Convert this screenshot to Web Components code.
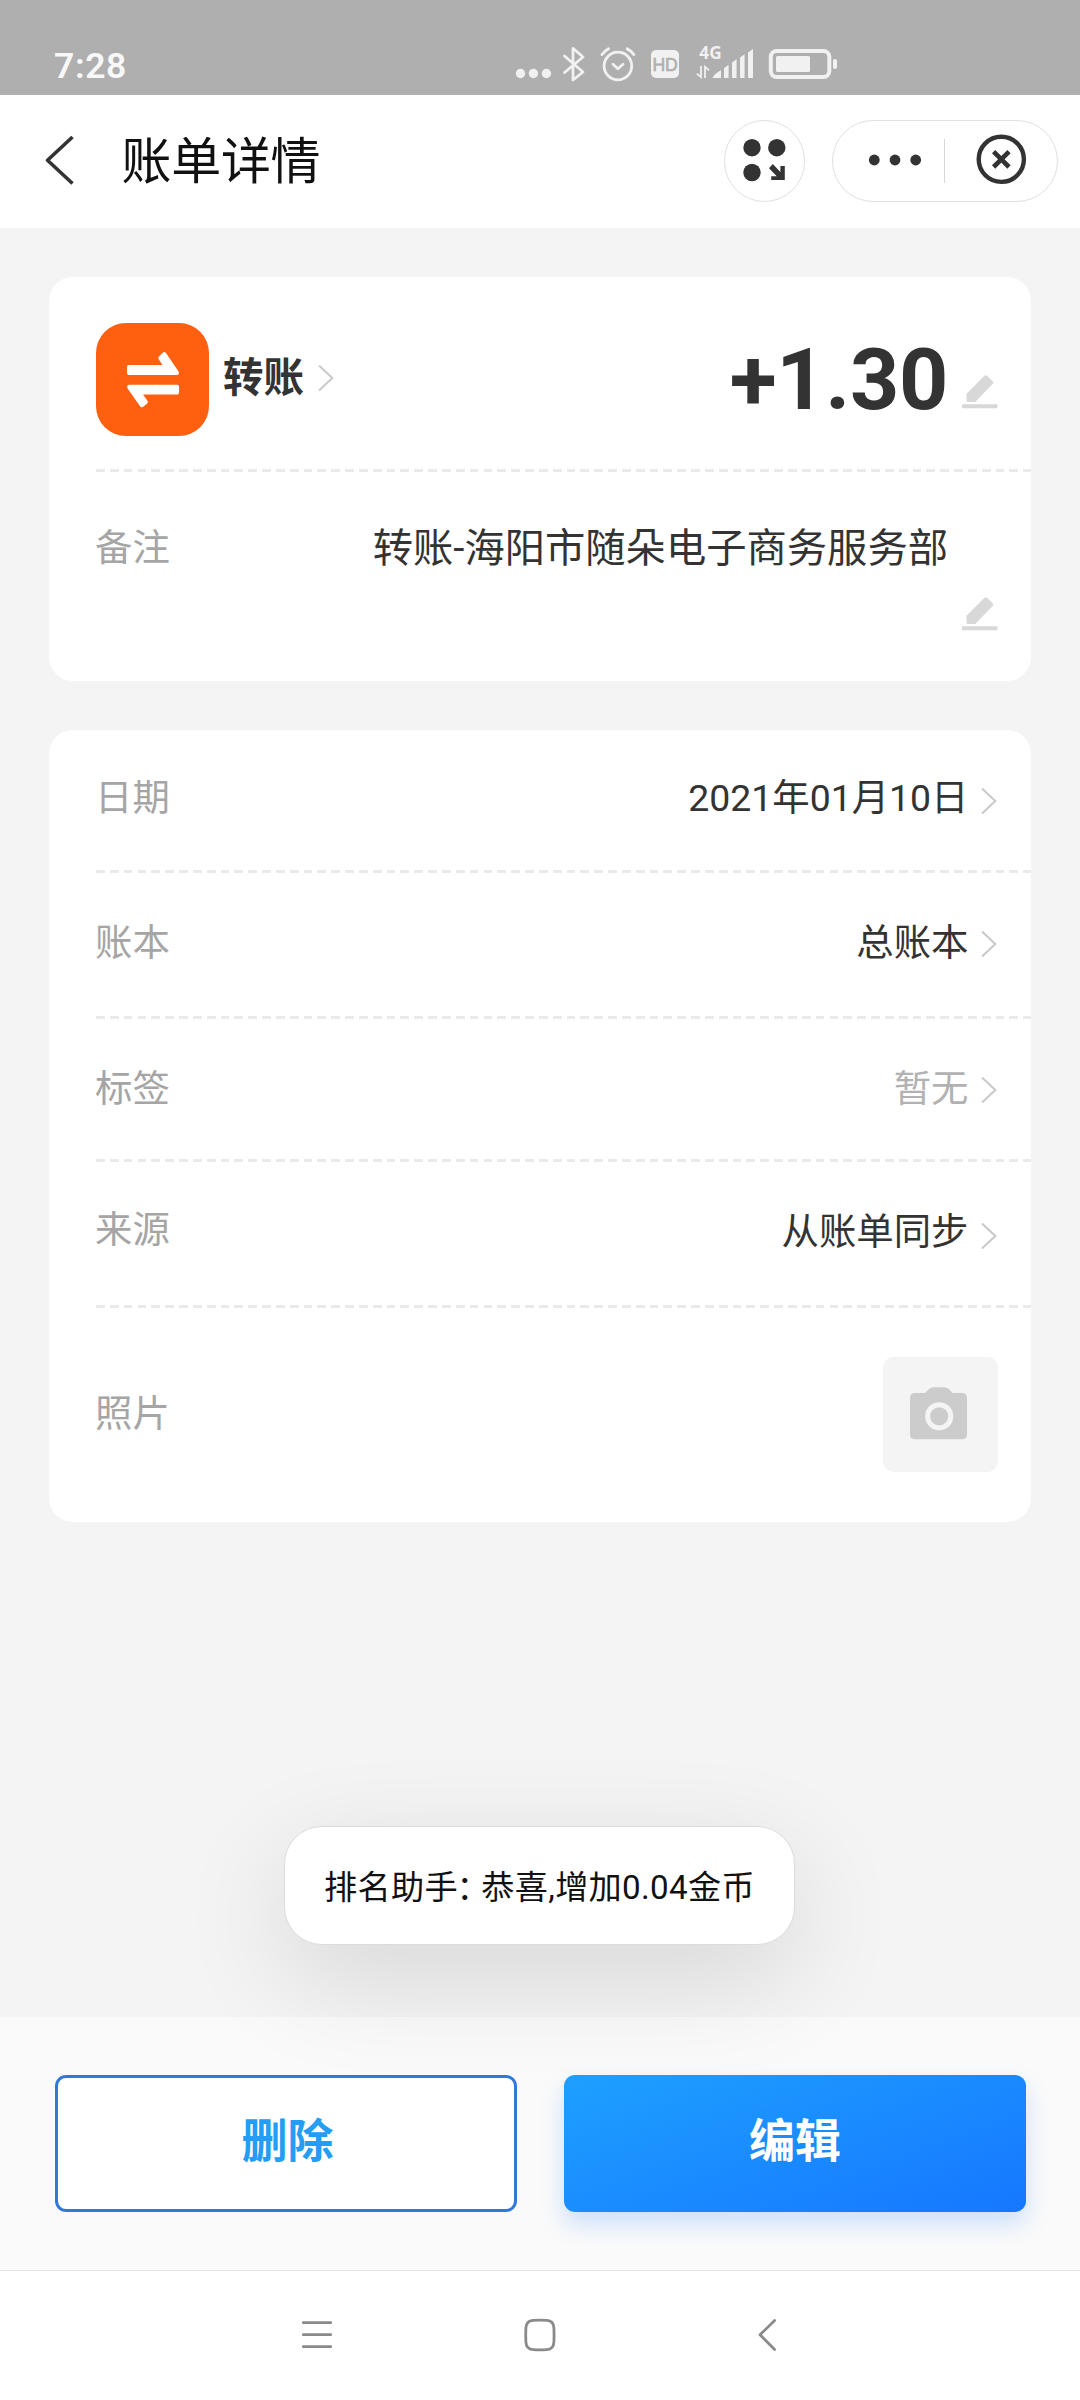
<!DOCTYPE html>
<html lang="zh-CN">
<head>
<meta charset="utf-8">
<title>账单详情</title>
<style>
  html, body { margin: 0; padding: 0; }
  body { width: 1080px; height: 2400px; overflow: hidden; background: #f4f4f4; font-family: Roboto, "Noto Sans CJK SC", sans-serif; color: #333; }
</style>
</head>
<body>
<bill-app></bill-app>
<script>
const define = (name, css, html) => customElements.define(name, class extends HTMLElement {
  constructor() {
    super();
    this.attachShadow({ mode: 'open' }).innerHTML = `<style>*{box-sizing:border-box}svg{display:block;flex:none}${css}</style>${html}`;
  }
});

define('status-bar', `
  :host { display: flex; height: 95px; background: #afafaf; color: #f1f1f1; padding-left: 54px; }
  .time { width: 458px; margin-top: 44.5px; font-size: 35.5px; line-height: 42px; font-weight: 600; letter-spacing: .6px; color: #f8f8f8; }
`, `
  <div class="time">7:28</div>
  <svg width="330" height="95" viewBox="512 0 330 95" fill="#f1f1f1">
    <circle cx="520.5" cy="73.5" r="4.7"/><circle cx="533.4" cy="73.5" r="4.7"/><circle cx="546.4" cy="73.5" r="4.7"/>
    <path d="M564.5 56L583 72L573 80V48.3L583 57L564.5 72.5" fill="none" stroke="#f1f1f1" stroke-width="2.8" stroke-linejoin="round" stroke-linecap="round"/>
    <g fill="none" stroke="#f1f1f1" stroke-linecap="round" stroke-linejoin="round">
      <circle cx="617.9" cy="66" r="13.8" stroke-width="2.8"/>
      <path d="M613 64.3L617.9 68.8L623 64.3" stroke-width="2.8"/>
      <path d="M602 54.5Q604.5 51 608.5 48.8M633.8 54.5Q631.5 51 627.3 48.8" stroke-width="3"/>
    </g>
    <rect x="651" y="50" width="28" height="28" rx="5"/>
    <text x="665.1" y="71" text-anchor="middle" font-family="Liberation Sans" font-weight="400" font-size="17.6" fill="#afafaf" stroke="#afafaf" stroke-width=".6">HD</text>
    <text x="699.3" y="59.4" font-family="Noto Sans" font-weight="700" font-size="17.2">4G</text>
    <path d="M712.5 78Q714.5 73.5 721 70.3V78ZM724 78V68.3L728.6 64.8V78ZM732 78V62.8L736.6 59V78ZM740 78V57.6L744.6 54.2V78ZM748 78V52.5L753 49V78Z"/>
    <path d="M701 66V77L696.8 73.6M705 78V66.7L709 70.4" fill="none" stroke="#f1f1f1" stroke-width="1.8"/>
    <rect x="770.8" y="51" width="58.5" height="26" rx="6" fill="none" stroke="#f1f1f1" stroke-width="4"/>
    <rect x="776" y="56" width="34" height="16" rx="1.5"/>
    <rect x="833" y="59" width="4" height="10" rx="2"/>
  </svg>`);

define('title-bar', `
  :host { display: flex; height: 133px; background: #fff; padding: 25px 22px 0 43px; }
  .back { margin-top: 14px; }
  h1 { margin: 11.5px 0 0 46.5px; font-size: 50px; line-height: 60px; font-weight: 400; color: #111; flex: 1; letter-spacing: -.3px; }
  .round, .capsule { border: 1px solid #e0e0e0; height: 82px; border-radius: 41px; display: flex; }
  .round { width: 81px; margin-right: 27px; }
  .capsule { width: 226px; }
`, `
  <svg class="back" width="32" height="52" viewBox="44 134 32 52" fill="none" stroke="#333" stroke-width="3.6" stroke-linejoin="round"><path d="M73.5 137L48.5 160.3L73.5 183.5"/></svg>
  <h1>账单详情</h1>
  <div class="round"><svg width="79" height="80" viewBox="725 121 79 80" fill="#333">
    <circle cx="752" cy="147.7" r="8.7"/><circle cx="776.8" cy="147.7" r="8.7"/><circle cx="752" cy="172.5" r="8.7"/>
    <path d="M772.8 164L780.4 171.9V166H784.8V180H771.2V176.2H776.8L769 168.3Z"/>
  </svg></div>
  <div class="capsule"><svg width="224" height="80" viewBox="833 121 224 80" fill="#333">
    <circle cx="874.3" cy="160" r="5.4"/><circle cx="895" cy="160" r="5.4"/><circle cx="915.7" cy="160" r="5.4"/>
    <rect x="944" y="139" width="1" height="44" fill="#d8d8d8"/>
    <circle cx="1001.3" cy="159.3" r="22.6" fill="none" stroke="#333" stroke-width="4.4"/>
    <path d="M993.6 151.6L1009 167M1009 151.6L993.6 167" stroke="#333" stroke-width="4.6"/>
  </svg></div>`);

define('info-card', `
  :host { display: block; width: 982px; margin-left: 49px; background: #fff; border-radius: 24px; padding-left: 47px; }
`, `<slot></slot>`);

define('dash-line', `
  :host { display: block; height: 3px; background: repeating-linear-gradient(90deg, #eaeaea 0 8.8px, transparent 8.8px 13.84px); }
`, ``);

define('chevron-icon', `:host { display: block; flex: none; }`, `
  <svg width="16" height="28" viewBox="0 0 16 28" fill="none" stroke="#c9c9c9" stroke-width="2"><path d="M1 1.5L14.3 14L1 26.5"/></svg>`);

define('pencil-icon', `:host { display: block; flex: none; }`, `
  <svg width="36" height="34" viewBox="0 0 36 34" fill="#d8d8d8"><path d="M4.5 18.8L22.2 1Q23.8 -.3 25.4 1.1L30.6 6.2Q31.9 7.6 30.6 9L13.3 27H6Q4.5 27 4.5 25.5Z"/><rect x="0" y="29.3" width="35.5" height="4" rx=".5"/></svg>`);

define('bill-summary', `
  :host { display: block; height: 192px; }
  .row { display: flex; padding-right: 33px; }
  .icon { width: 113px; height: 113px; border-radius: 30px; background: #ff6010; margin-top: 46.5px; }
  .name { font-size: 40.5px; line-height: 50px; font-weight: 700; margin: 76px 0 0 14px; }
  chevron-icon { margin: 87px 0 0 14px; }
  .amount { flex: 1; text-align: right; font-size: 86px; line-height: 100px; font-weight: 700; margin: 53.5px 14px 0 0; letter-spacing: -.3px; }
  pencil-icon { margin-top: 98.5px; }
`, `
  <div class="row">
    <div class="icon"><svg width="113" height="113" viewBox="96 323 113 113" fill="#fff">
      <path d="M128.8 365H162.5L158.6 359Q157.8 357.6 159 356.4L163 352.6Q164.6 351.4 166 353L178.4 371.2Q180 375 176.5 375H128.8Q127 375 127 373.2V366.8Q127 365 128.8 365Z"/>
      <path d="M177.2 394.5H143L147.6 401Q148.4 402.4 147.2 403.6L143.2 406.8Q141.6 407.9 140.2 406.4L127.6 388.4Q126 384.8 129.5 384.8H177.2Q179 384.8 179 386.6V392.7Q179 394.5 177.2 394.5Z"/>
    </svg></div>
    <div class="name">转账</div><chevron-icon></chevron-icon>
    <div class="amount">+1.30</div><pencil-icon></pencil-icon>
  </div>`);

define('bill-remark', `
  :host { display: block; height: 209.5px; padding: 51.5px 33px 0 0; }
  .row { display: flex; justify-content: space-between; line-height: 50px; }
  .label { font-size: 37.4px; color: #a5a5a5; margin-left: -1px; }
  .value { font-size: 40.3px; color: #333; margin: 1px 50px -1px 0; }
  .edit { display: flex; justify-content: flex-end; margin-top: 23.5px; }
`, `
  <div class="row"><div class="label">备注</div><div class="value">转账-海阳市随朵电子商务服务部</div></div>
  <div class="edit"><pencil-icon></pencil-icon></div>`);

define('detail-row', `
  :host { display: flex; height: var(--h, 143px); font-size: 37.4px; line-height: 50px; padding-right: 34px; }
  .label { flex: 1; color: #a5a5a5; margin: var(--l, 45px) 0 0 -1px; }
  .value { color: var(--ink, #333); margin-top: var(--v, 45px); margin-right: 12.5px; }
  chevron-icon { margin-top: var(--c, 57px); }
`, `<div class="label"><slot name="label"></slot></div><div class="value"><slot></slot></div><chevron-icon></chevron-icon>`);

define('photo-row', `
  :host { display: flex; height: 214px; font-size: 37.4px; line-height: 50px; color: #a5a5a5; padding-right: 33px; }
  .label { flex: 1; margin: 80.5px 0 0 -1px; }
  .box { width: 115px; height: 115px; border-radius: 11px; background: #f4f4f4; margin-top: 49px; }
`, `
  <div class="label"><slot></slot></div>
  <div class="box"><svg width="115" height="115" viewBox="883 1357 115 115" fill="#ccc">
    <path d="M915 1393H925L929 1389Q931 1387.2 934 1387.2H944Q947 1387.2 949 1389L952.5 1393H962Q967 1393 967 1398V1434.5Q967 1439.3 962 1439.3H915Q910 1439.3 910 1434.5V1398Q910 1393 915 1393Z"/>
    <circle cx="939.2" cy="1416.3" r="11.6" fill="none" stroke="#f4f4f4" stroke-width="5"/>
  </svg></div>`);

define('toast-message', `
  :host { position: absolute; left: 284px; top: 1826px; width: 511px; height: 119px; border-radius: 38px; background: #fff; border: 1px solid #dcdcdc;
    box-shadow: 0 32px 108px rgba(0,0,0,.12); display: flex; justify-content: center; align-items: center; padding-top: 4px; font-size: 33.2px; letter-spacing: .3px; line-height: 50px; color: #111; white-space: nowrap; }
  .colon { font-feature-settings: "halt"; margin: 0 8px 0 -1.5px; }
`, `<div>排名助手<span class="colon">：</span>恭喜,增加0.04金币</div>`);

define('action-bar', `
  :host { display: flex; height: 253px; background: #fafafa; padding: 58px 54px 0 55px; justify-content: space-between; }
  button { width: 462px; height: 137px; border-radius: 11px; font: 700 46px/60px Roboto, "Noto Sans CJK SC", sans-serif; padding: 0 0 6px; margin: 0; }
  .del { border: 3px solid #3179d6; background: #fff; color: #259df4; padding-left: 3px; }
  .edit { border: 0; color: #fff; background: linear-gradient(160deg, #1ea0ff 0%, #1677ff 100%); box-shadow: 0 12px 24px rgba(22,119,255,.2); }
`, `<button class="del">删除</button><button class="edit">编辑</button>`);

define('nav-bar', `
  :host { display: flex; height: 130px; background: #fff; border-top: 1px solid #e3e3e3; padding: 46px 0 0 300px; gap: 188px; }
`, `
  <svg width="34" height="36" viewBox="300 2317 34 36" stroke="#8a8a8a" stroke-width="2.8" stroke-linecap="round"><path d="M303.3 2322.7H330.7M303.3 2334.7H330.7M303.3 2346.7H330.7"/></svg>
  <svg width="36" height="36" viewBox="522 2317 36 36" fill="none" stroke="#8a8a8a" stroke-width="2.8"><path d="M533 2320.4Q540 2320 547 2320.4Q553.6 2320.8 553.9 2328Q554.3 2335 553.9 2342Q553.6 2349.2 547 2349.6Q540 2350 533 2349.6Q526.2 2349.2 525.9 2342Q525.5 2335 525.9 2328Q526.2 2320.8 533 2320.4Z"/></svg>
  <svg width="22" height="36" viewBox="746 2317 22 36" fill="none" stroke="#8a8a8a" stroke-width="2.8" stroke-linecap="round" stroke-linejoin="round" style="overflow:visible"><path d="M774.6 2320.5L760 2334.8L774.6 2349.5"/></svg>`);

define('bill-app', `
  :host { display: flex; flex-direction: column; width: 1080px; height: 2400px; position: relative; }
  main { flex: 1; padding-top: 48.5px; }
  .details { margin-top: 49px; }
`, `
  <status-bar></status-bar>
  <title-bar></title-bar>
  <main>
    <info-card>
      <bill-summary></bill-summary>
      <dash-line></dash-line>
      <bill-remark></bill-remark>
    </info-card>
    <info-card class="details">
      <detail-row style="--h:140px;--l:42.5px;--v:42.5px;--c:57px"><span slot="label">日期</span>2021年01月10日</detail-row>
      <dash-line></dash-line>
      <detail-row><span slot="label">账本</span>总账本</detail-row>
      <dash-line></dash-line>
      <detail-row style="--h:140px;--ink:#b2b2b2"><span slot="label">标签</span>暂无</detail-row>
      <dash-line></dash-line>
      <detail-row style="--l:42.5px;--c:59.5px"><span slot="label">来源</span>从账单同步</detail-row>
      <dash-line></dash-line>
      <photo-row>照片</photo-row>
    </info-card>
  </main>
  <action-bar></action-bar>
  <nav-bar></nav-bar>
  <toast-message></toast-message>`);
</script>
</body>
</html>
